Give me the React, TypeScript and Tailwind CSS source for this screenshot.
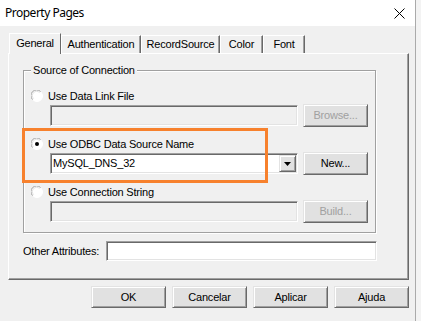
import React from "react";

const sunken =
  "border border-t-[#a0a0a0] border-l-[#a0a0a0] border-r-white border-b-white shadow-[inset_1px_1px_0_#696969,inset_-1px_-1px_0_#e3e3e3]";
const raised =
  "border border-t-[#e3e3e3] border-l-[#e3e3e3] border-r-[#696969] border-b-[#696969] shadow-[inset_1px_1px_0_#ffffff,inset_-1px_-1px_0_#a0a0a0]";

function Radio({ checked = false }: { checked?: boolean }) {
  return (
    <svg width="12" height="12" viewBox="0 0 12 12" className="shrink-0">
      <circle cx="6" cy="6" r="5.5" fill="#ffffff" stroke="#ffffff" />
      <path d="M1.6 9.6 A5 5 0 0 1 9.6 1.6" fill="none" stroke="#a0a0a0" strokeWidth="1" />
      <path d="M2.6 8.6 A3.8 3.8 0 0 1 8.6 2.6" fill="none" stroke="#e3e3e3" strokeWidth="1" />
      {checked && <circle cx="6" cy="6" r="2" fill="#000" />}
    </svg>
  );
}

function Button({ label, disabled = false, w = "w-[65px]", h = "h-[23px]" }: { label: string; disabled?: boolean; w?: string; h?: string }) {
  return (
    <div className={`${w} ${h} ${raised} bg-[#e1e1e1] flex items-center justify-center ${disabled ? "text-[#a0a0a0]" : "text-black"}`}>
      {label}
    </div>
  );
}

function Option({ label, checked = false }: { label: string; checked?: boolean }) {
  return (
    <div className="flex items-center h-[14px] gap-[5px] pl-[7px]">
      <Radio checked={checked} />
      <span>{label}</span>
    </div>
  );
}

export default function App() {
  const tabs = [
    { name: "Authentication", w: "w-[80px]" },
    { name: "RecordSource", w: "w-[79px]" },
    { name: "Color", w: "w-[43px]" },
    { name: "Font", w: "w-[42px]" },
  ];

  return (
    <div className="w-[421px] h-[321px] bg-[#f3f3f3] flex text-[11px] tracking-[-0.2px] text-black [font-family:'Liberation_Sans',Arial,sans-serif]">
      <div className="w-[416px] h-full bg-[#f0f0f0] border-r border-[#aaaaaa] flex flex-col">
        {/* title bar */}
        <div className="h-[26px] bg-white flex items-center justify-between pl-[5px] pr-[10px]">
          <span className="text-[12px] tracking-[-0.5px] [font-family:'Noto_Sans',sans-serif]">Property Pages</span>
          <svg width="11" height="11" viewBox="0 0 11 11">
            <path d="M0.5 0.5 L10.5 10.5 M10.5 0.5 L0.5 10.5" stroke="#000" strokeWidth="1" />
          </svg>
        </div>

        <div className="pt-[7px] pl-[8px] flex flex-col">
          {/* tabs */}
          <div className="h-[20px] flex items-end pl-[1px]">
            <div className="w-[52px] h-[21px] mb-[-1px] relative z-10 bg-[#f0f0f0] border-t border-l border-white border-r border-r-[#696969] flex items-center justify-center pb-[2px]">
              General
            </div>
            {tabs.map((t) => (
              <div
                key={t.name}
                className={`${t.w} h-[18px] border-t border-l border-white border-r border-r-[#696969] shadow-[inset_-1px_0_0_#a0a0a0] flex items-center justify-center`}
              >
                {t.name}
              </div>
            ))}
          </div>

          {/* panel */}
          <div className="w-[401px] h-[227px] border border-t-white border-l-white border-r-[#696969] border-b-[#696969] shadow-[inset_-1px_-1px_0_#a0a0a0] pl-[14px] pt-[16px] flex flex-col">
            <div className="relative w-[353px] h-[163px] border border-[#a0a0a0] shadow-[inset_1px_1px_0_#ffffff,1px_1px_0_#ffffff] pt-[18px] flex flex-col">
              <span className="absolute left-[7px] top-[-8px] px-[2px] bg-[#f0f0f0] leading-[14px]">Source of Connection</span>

              <Option label="Use Data Link File" />
              <div className="mt-[1px] h-[23px] flex items-center gap-[5px] pl-[26px]">
                <div className={`w-[248px] h-[21px] ${sunken} bg-[#f0f0f0]`} />
                <Button label="Browse..." disabled />
              </div>

              <div className="mt-[10px]">
                <Option label="Use ODBC Data Source Name" checked />
              </div>
              <div className="mt-[1px] h-[23px] flex items-center gap-[5px] pl-[26px]">
                <div className={`w-[248px] h-[21px] ${sunken} bg-white flex items-center justify-between pl-[2px] pr-[1px]`}>
                  <span>MySQL_DNS_32</span>
                  <div className={`w-[17px] h-[17px] ${raised} bg-[#e1e1e1] flex items-center justify-center`}>
                    <svg width="7" height="4" viewBox="0 0 7 4">
                      <path d="M0 0 H7 L3.5 4 Z" fill="#000" />
                    </svg>
                  </div>
                </div>
                <Button label="New..." />
              </div>

              <div className="mt-[10px]">
                <Option label="Use Connection String" />
              </div>
              <div className="mt-[1px] h-[23px] flex items-center gap-[5px] pl-[26px]">
                <div className={`w-[248px] h-[21px] ${sunken} bg-[#f0f0f0]`} />
                <Button label="Build..." disabled />
              </div>

              <div className="absolute left-[-2px] top-[57px] w-[246px] h-[55px] border-[3px] border-[#f7812d]" />
            </div>

            <div className="mt-[8px] w-[354px] h-[20px] flex items-center justify-between pl-[0px]">
              <span>Other Attributes:</span>
              <div className={`w-[271px] h-[20px] ${sunken} bg-white`} />
            </div>
          </div>

          {/* footer buttons */}
          <div className="mt-[6px] w-[401px] flex justify-end gap-[6px]">
            <Button label="OK" w="w-[75px]" h="h-[22px]" />
            <Button label="Cancelar" w="w-[75px]" h="h-[22px]" />
            <Button label="Aplicar" w="w-[75px]" h="h-[22px]" />
            <Button label="Ajuda" w="w-[75px]" h="h-[22px]" />
          </div>
        </div>
      </div>
    </div>
  );
}
